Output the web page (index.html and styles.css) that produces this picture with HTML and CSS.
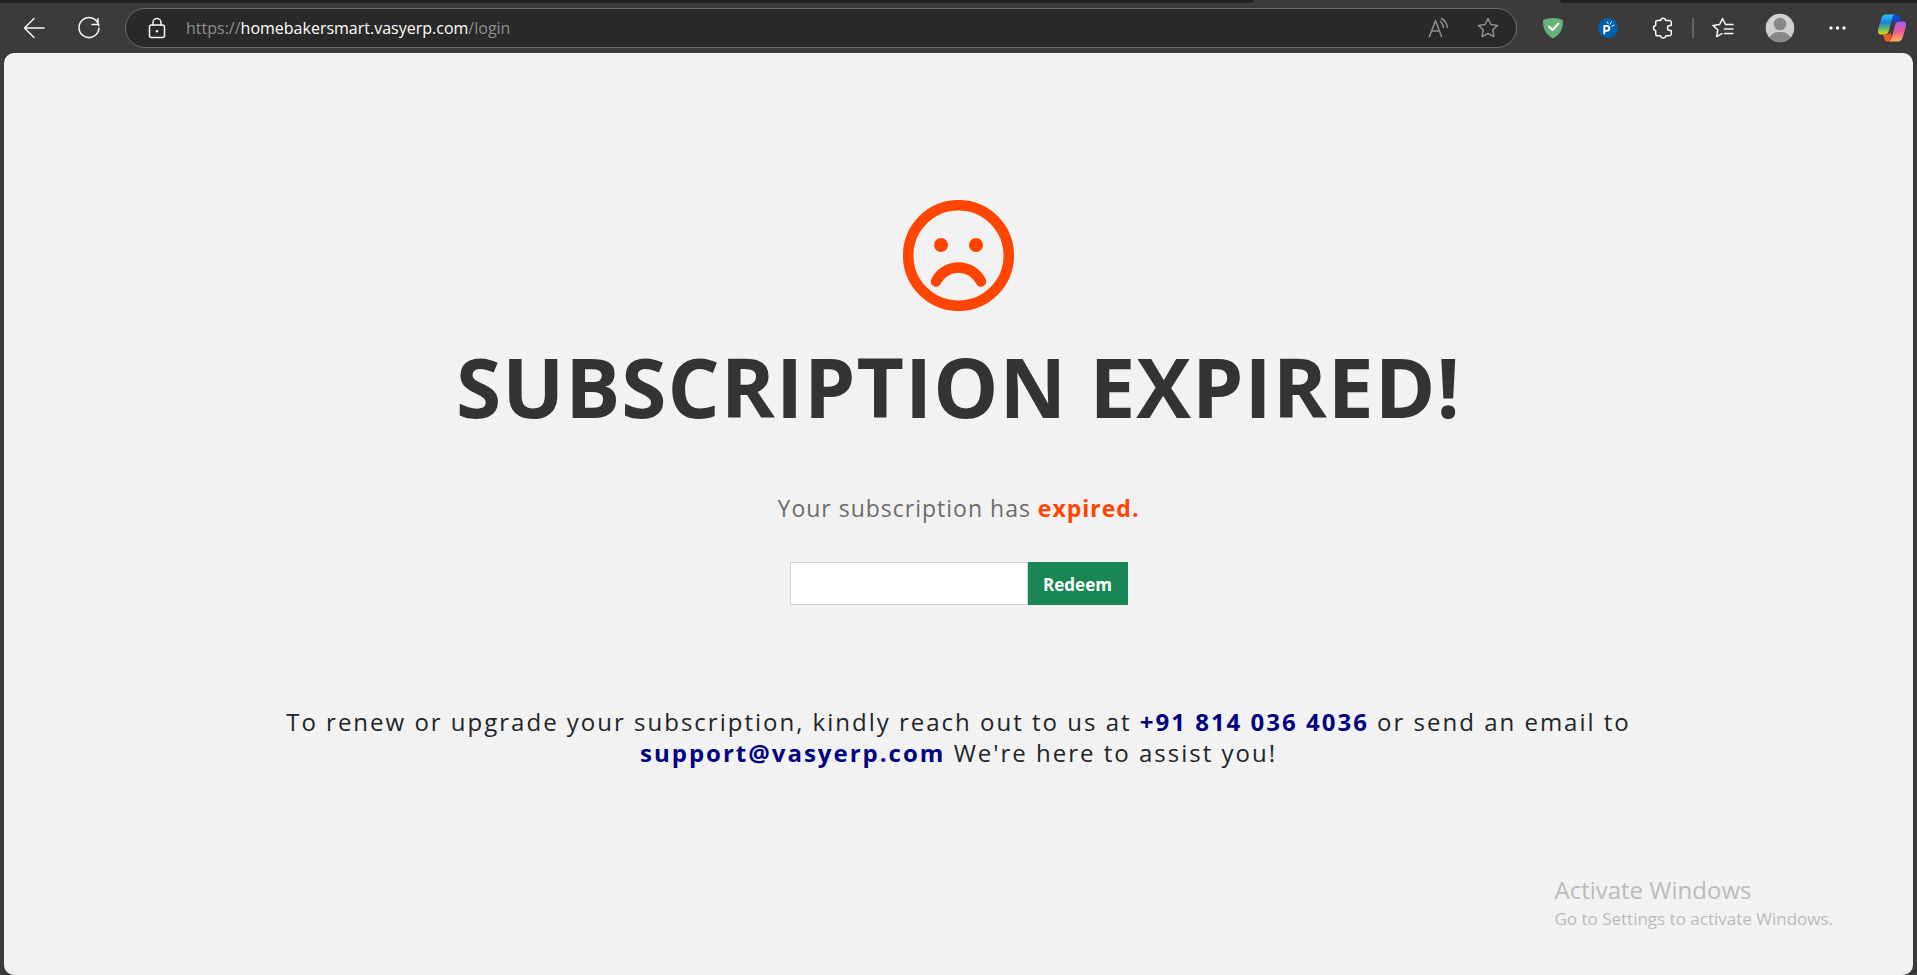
FILE: index.html
```
<!DOCTYPE html>
<html lang="en">
<head>
    <meta charset="UTF-8">
    <meta name="viewport" content="width=device-width, initial-scale=1.0">
    <title>Subscription Expired</title>
    <link rel="stylesheet" href="styles.css">
</head>
<body>
    <div class="tab-strip">
        <div class="tabs-left"></div>
        <div class="tab-active"></div>
        <div class="tabs-right"></div>
    </div>

    <header class="toolbar">
        <div class="tool-group">
            <button class="tool-btn" aria-label="Back">
                <svg width="24" height="24" viewBox="0 0 24 24"><path d="M22 12H2.500M12 2.500L2.500 12L12 21.500"/></svg>
            </button>
            <button class="tool-btn" aria-label="Refresh">
                <svg width="24" height="24" viewBox="0 0 24 24"><path d="M21.800 9.500A10 10 0 1 0 22 12M21 2.500V8.500H15"/></svg>
            </button>
        </div>

        <div class="address-bar">
            <svg class="lock" width="24" height="24" viewBox="0 0 24 24"><rect x="4.500" y="9" width="15" height="12.500" rx="2"/><path d="M8 9V6.500a4 4 0 0 1 8 0V9"/><circle class="fill" cx="12" cy="15.200" r="1.300"/></svg>
            <div class="url">https://<span>homebakersmart.vasyerp.com</span>/login</div>
            <button class="address-btn" aria-label="Read aloud">
                <svg width="24" height="24" viewBox="0 0 24 24"><path d="M2.500 20.500L8.500 4.500L14.500 20.500M4.600 15H12.400M13.500 5.500A9 9 0 0 1 16.500 11.500M14.500 2.500A13 13 0 0 1 20.500 11.500"/></svg>
            </button>
            <button class="address-btn" aria-label="Add to favorites">
                <svg width="24" height="24" viewBox="0 0 24 24"><path d="M12 2.500l2.900 6 6.600.900-4.800 4.600 1.200 6.600L12 17.500l-5.900 3.100 1.200-6.600L2.500 9.400l6.600-.900z"/></svg>
            </button>
        </div>

        <div class="tool-group">
            <button class="tool-btn" aria-label="AdGuard">
                <svg width="24" height="24" viewBox="0 0 24 24"><path class="shield" d="M12 2c3.500 0 7 .700 10 2 0 7-1 13.500-10 18.500C3 17.500 2 11 2 4c3-1.300 6.500-2 10-2z"/><path class="check" d="M8 10.500l3.500 3.500L17.500 7.500"/></svg>
            </button>
            <button class="tool-btn" aria-label="PayPal">
                <svg width="24" height="24" viewBox="0 0 24 24"><circle class="badge" cx="12" cy="12" r="10"/><path class="mark" d="M8.300 17.500V10H11a2.300 2.300 0 0 1 0 4.700H8.300"/><path class="rays" d="M12 7.500L11.500 6M14 8.300L15.500 5.800M15.800 10.500L18.200 9"/></svg>
            </button>
            <button class="tool-btn" aria-label="Extensions">
                <svg width="24" height="24" viewBox="0 0 24 24"><path d="M6.500 4.500H9.500a2.700 2.700 0 0 1 5.300 0H18.500a1.800 1.800 0 0 1 1.800 1.800V9.500H19a2.500 2.500 0 0 0 0 5h1.300V18a1.800 1.800 0 0 1-1.800 1.800H14.800a2.700 2.700 0 0 1-5.300 0H6.500A1.800 1.800 0 0 1 4.700 18V14.700a2.700 2.700 0 0 1 0-5.300V6.300A1.800 1.800 0 0 1 6.500 4.500z"/></svg>
            </button>
            <div class="divider"></div>
            <button class="tool-btn" aria-label="Favorites">
                <svg width="24" height="24" viewBox="0 0 24 24"><path d="M22 8.500H14.500L11.500 2.500l-2.900 6-6.600.900 4.800 4.600-1.200 6.600 5.400-3M13.500 13H22M13.500 17.500H22"/></svg>
            </button>
            <button class="tool-btn avatar-btn" aria-label="Profile">
                <svg width="30" height="30" viewBox="0 0 30 30"><circle class="avatar-bg" cx="15" cy="15" r="14.300"/><circle class="avatar-fg" cx="15" cy="11" r="6.300"/><path class="avatar-fg" d="M4.500 24.500C6 21 10 19 15 19s9 2 10.500 5.500A14.300 14.300 0 0 1 4.500 24.500z"/></svg>
            </button>
            <button class="tool-btn" aria-label="Settings and more">
                <svg width="24" height="24" viewBox="0 0 24 24"><circle class="fill" cx="6" cy="12" r="1.700"/><circle class="fill" cx="12.500" cy="12" r="1.700"/><circle class="fill" cx="19" cy="12" r="1.700"/></svg>
            </button>
            <button class="tool-btn" aria-label="Copilot">
                <svg class="copilot" width="30" height="30" viewBox="0 0 30 30">
                    <defs>
                        <linearGradient id="cp1" x1="0" y1="0" x2="0" y2="1"><stop offset="0" stop-color="#2bc4f5"/><stop offset=".4" stop-color="#1a84dd"/><stop offset=".7" stop-color="#5fb567"/><stop offset="1" stop-color="#f2cf0c"/></linearGradient>
                        <linearGradient id="cp2" x1="0" y1="0" x2="0" y2="1"><stop offset="0" stop-color="#a45cf0"/><stop offset=".5" stop-color="#ee5a93"/><stop offset="1" stop-color="#ffb05e"/></linearGradient>
                    </defs>
                    <path fill="#1546cf" d="M15 1.500h4.500c2 0 2.700 1 3.300 3l1.200 4h-4.500c-2 0-3 1-3.500 2.500z"/>
                    <path fill="#f0592b" d="M15 28.500h-4.500c-2 0-2.700-1-3.300-3l-1.200-4h4.500c2 0 3-1 3.500-2.500z"/>
                    <path fill="url(#cp1)" d="M9 1.500h9.500c-2 0-2.700 1.500-3.200 3.500L12 17.500c-.800 3-2 4-4.500 4H4c-3 0-3.600-2.500-2.800-5.500L4 6.500c1-3.500 2-5 5-5z"/>
                    <path fill="url(#cp2)" d="M21 28.500h-9.500c2 0 2.700-1.500 3.200-3.500L18 12.500c.800-3 2-4 4.500-4H26c3 0 3.600 2.500 2.800 5.500L26 23.500c-1 3.500-2 5-5 5z"/>
                </svg>
            </button>
        </div>
    </header>

    <main class="page">
        <svg class="sad-icon" width="111" height="111" viewBox="0 0 111 111">
            <circle class="line" cx="55.500" cy="55.500" r="50.300"/>
            <circle class="eye" cx="38" cy="45" r="7"/>
            <circle class="eye" cx="73" cy="45" r="7"/>
            <path class="line" d="M33 81.500C37 73 46 67.500 55.500 67.500S74 73 78 81.500"/>
        </svg>

        <h1>SUBSCRIPTION EXPIRED!</h1>
        <p class="status">Your subscription has <b>expired.</b></p>

        <form class="redeem-form">
            <input type="text" aria-label="Redeem code">
            <button type="button">Redeem</button>
        </form>

        <p class="contact">To renew or upgrade your subscription, kindly reach out to us at <a href="tel:+918140364036">+91 814 036 4036</a> or send an email to <a href="mailto:support@vasyerp.com">support@vasyerp.com</a> We're here to assist you!</p>
    </main>

    <div class="watermark">
        <div class="watermark-title">Activate Windows</div>
        <div class="watermark-text">Go to Settings to activate Windows.</div>
    </div>
</body>
</html>
```
FILE: styles.css
```
* {
    box-sizing: border-box;
}
body {
    font-family: 'Segoe UI', 'Open Sans', sans-serif;
    background: #3b3b3b;
    margin: 0;
    display: flex;
    flex-direction: column;
    min-height: 100vh;
}
button {
    font-family: inherit;
    border: none;
    cursor: pointer;
}

/* Browser bar */
.tab-strip {
    display: flex;
    height: 3px;
}
.tabs-left {
    flex: 1254;
    background: #202020;
    border-bottom-right-radius: 3px;
}
.tab-active {
    flex: 306;
}
.tabs-right {
    flex: 357;
    background: #202020;
    border-bottom-left-radius: 3px;
}
.toolbar {
    display: flex;
    align-items: center;
    gap: 20px;
    height: 50px;
    padding: 0 9px 0 18px;
}
.tool-group {
    display: flex;
    align-items: center;
    gap: 23px;
}
.tool-btn, .address-btn {
    display: flex;
    align-items: center;
    justify-content: center;
    width: 32px;
    height: 32px;
    padding: 0;
    background: none;
}
.avatar-btn {
    width: 36px;
}
.toolbar svg {
    flex: none;
    fill: none;
    stroke: #f5f5f5;
    stroke-width: 1.5;
    stroke-linecap: round;
    stroke-linejoin: round;
}
.toolbar .address-btn svg {
    stroke: #8f8f8f;
}
.toolbar .copilot {
    stroke: none;
}
.fill {
    fill: #f5f5f5;
    stroke: none;
}
.shield {
    fill: #67b279;
    stroke: none;
}
.check {
    stroke: #fff;
    stroke-width: 2;
}
.badge {
    fill: #0060b5;
    stroke: none;
}
.mark {
    stroke: #fff;
    stroke-width: 2;
}
.rays {
    stroke: #fff;
    stroke-width: 1;
}
.avatar-bg {
    fill: #d2d0ce;
    stroke: none;
}
.avatar-fg {
    fill: #8a8886;
    stroke: none;
}
.divider {
    width: 2px;
    height: 20px;
    margin: 0 -10px;
    background: #636363;
}
.address-bar {
    flex: 1;
    display: flex;
    align-items: center;
    gap: 17px;
    height: 40px;
    padding: 0 12px 0 19px;
    background: #292929;
    border: 1px solid #6b6b6b;
    border-radius: 20px;
}
.url {
    flex: 1;
    font-size: 16px;
    line-height: 24px;
    color: #8f8f8f;
}
.url span {
    color: #fff;
}

/* Page */
.page {
    flex: 1;
    display: flex;
    flex-direction: column;
    align-items: center;
    margin: 0 4px;
    padding: 147px 20px 40px;
    background: #f2f2f2;
    border-radius: 10px;
    text-align: center;
}
.sad-icon .line {
    fill: none;
    stroke: #ff4500;
    stroke-width: 10.5;
    stroke-linecap: round;
}
.sad-icon .eye {
    fill: #ff4500;
}
h1 {
    margin: 25px 0 0;
    font-size: 82px;
    line-height: 100px;
    font-weight: 700;
    letter-spacing: 1px;
    color: #333;
}
.status {
    margin: 56px 0 0;
    font-size: 23px;
    line-height: 32px;
    letter-spacing: 1px;
    color: #6c6c6c;
}
.status b {
    color: #ff4500;
}
.redeem-form {
    display: flex;
    margin-top: 38px;
}
.redeem-form input {
    width: 238px;
    height: 43px;
    padding: 6px 12px;
    font: inherit;
    border: 1px solid #ced4da;
    border-radius: 0;
    background: #fff;
}
.redeem-form button {
    width: 100px;
    height: 43px;
    padding: 2px 0 0;
    font-size: 17px;
    font-weight: 700;
    color: #fff;
    background: #198754;
}
.contact {
    max-width: 1400px;
    margin: 101px 0 0;
    font-size: 24px;
    line-height: 31px;
    font-weight: 500;
    letter-spacing: 2px;
    color: #212529;
}
.contact a {
    color: #000080;
    font-weight: 700;
    text-decoration: none;
}

/* Sits over the page in the screen corner */
.watermark {
    position: absolute;
    right: 84px;
    bottom: 43px;
    color: #bbb;
}
.watermark-title {
    font-size: 24px;
    line-height: 32px;
}
.watermark-text {
    font-size: 17px;
    line-height: 26px;
}
```
